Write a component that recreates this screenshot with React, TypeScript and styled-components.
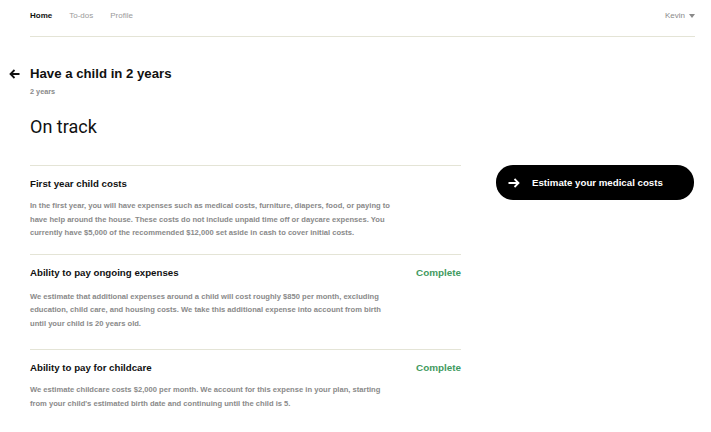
import styled, { createGlobalStyle } from "styled-components";

// Secções do plano
interface Goal {
  title: string;
  status?: string;
  loose?: boolean;
  text: string;
}

const goals: Goal[] = [
  {
    title: "First year child costs",
    text: "In the first year, you will have expenses such as medical costs, furniture, diapers, food, or paying to have help around the house. These costs do not include unpaid time off or daycare expenses. You currently have $5,000 of the recommended $12,000 set aside in cash to cover initial costs.",
  },
  {
    title: "Ability to pay ongoing expenses",
    status: "Complete",
    loose: true,
    text: "We estimate that additional expenses around a child will cost roughly $850 per month, excluding education, child care, and housing costs. We take this additional expense into account from birth until your child is 20 years old.",
  },
  {
    title: "Ability to pay for childcare",
    status: "Complete",
    text: "We estimate childcare costs $2,000 per month. We account for this expense in your plan, starting from your child's estimated birth date and continuing until the child is 5.",
  },
];

export default function App() {
  return (
    <>
      <GlobalStyle />
      <Page>
        <Nav>
          <NavLinks>
            <NavLink $active>Home</NavLink>
            <NavLink>To-dos</NavLink>
            <NavLink>Profile</NavLink>
          </NavLinks>
          <UserMenu>
            Kevin
            <svg width="6" height="4" viewBox="0 0 6 4">
              <path d="M0 0h6L3 4z" fill="#8a8a8a" />
            </svg>
          </UserMenu>
        </Nav>

        <TitleRow>
          <BackButton>
            <svg width="11" height="10" viewBox="0 0 11 10" fill="none">
              <path d="M10.5 5H1.5M5.5 1 1.5 5l4 4" stroke="#111" strokeWidth="1.8" />
            </svg>
          </BackButton>
          <Title>Have a child in 2 years</Title>
        </TitleRow>
        <Subtitle>2 years</Subtitle>
        <Status>On track</Status>

        <Main>
          <Goals>
            {goals.map((goal) => (
              <GoalSection key={goal.title} $loose={goal.loose}>
                <GoalHeader>
                  <GoalTitle>{goal.title}</GoalTitle>
                  {goal.status && <GoalStatus>{goal.status}</GoalStatus>}
                </GoalHeader>
                <GoalText $loose={goal.loose}>{goal.text}</GoalText>
              </GoalSection>
            ))}
          </Goals>
          <Side>
            <ActionButton>
              <svg width="12" height="10" viewBox="0 0 12 10" fill="none">
                <path d="M0.5 5H10.5M6.5 1l4 4-4 4" stroke="#fff" strokeWidth="1.8" />
              </svg>
              Estimate your medical costs
            </ActionButton>
          </Side>
        </Main>
      </Page>
    </>
  );
}

const GlobalStyle = createGlobalStyle`
  body {
    margin: 0;
    background: #fff;
    font-family: "Liberation Sans", Arial, sans-serif;
    color: #111;
  }
`;

const Page = styled.div`
  padding: 0 16px 0 30px;
`;

const Nav = styled.nav`
  display: flex;
  justify-content: space-between;
  align-items: flex-start;
  height: 37px;
  padding-top: 11px;
  box-sizing: border-box;
  border-bottom: 1px solid #e4e4d6;
`;

const NavLinks = styled.div`
  display: flex;
  gap: 17px;
`;

const NavLink = styled.a<{ $active?: boolean }>`
  font-size: 8px;
  line-height: 10px;
  font-weight: ${(p) => (p.$active ? 700 : 400)};
  color: ${(p) => (p.$active ? "#111" : "#9a9a9a")};
  cursor: pointer;
`;

const UserMenu = styled.div`
  display: flex;
  align-items: center;
  gap: 4px;
  font-size: 8px;
  line-height: 10px;
  color: #8a8a8a;
`;

const TitleRow = styled.div`
  display: flex;
  align-items: center;
  margin: 29px 0 0 -21px;
`;

const BackButton = styled.span`
  display: flex;
  width: 21px;
`;

const Title = styled.h1`
  margin: 0;
  font-size: 13.2px;
  line-height: 16px;
  font-weight: 700;
`;

const Subtitle = styled.div`
  margin-top: 5px;
  font-size: 7.3px;
  line-height: 10px;
  font-weight: 700;
  color: #8a8a8a;
`;

const Status = styled.h2`
  margin: 19px 0 0;
  font-family: Roboto, "Liberation Sans", sans-serif;
  font-size: 18px;
  line-height: 22px;
  font-weight: 400;
`;

const Main = styled.div`
  display: grid;
  grid-template-columns: 431px 1fr;
  gap: 35px;
  margin-top: 27px;
  align-items: start;
`;

const Goals = styled.div`
  display: flex;
  flex-direction: column;
`;

const GoalSection = styled.section<{ $loose?: boolean }>`
  border-top: 1px solid #e4e4d6;
  padding: 12px 0 ${(p) => (p.$loose ? "19px" : "14px")};
`;

const GoalHeader = styled.div`
  display: flex;
  justify-content: space-between;
  align-items: center;
  height: 12px;
`;

const GoalTitle = styled.h3`
  margin: 0;
  font-size: 9.7px;
  line-height: 12px;
  font-weight: 700;
`;

const GoalStatus = styled.span`
  font-size: 9.9px;
  line-height: 12px;
  font-weight: 700;
  color: #3f9a60;
`;

const GoalText = styled.p<{ $loose?: boolean }>`
  margin: ${(p) => (p.$loose ? "11px" : "9px")} 0 0;
  max-width: 366px;
  font-size: 7.6px;
  line-height: 13.5px;
  font-weight: 700;
  color: #8a8a8a;
`;

const Side = styled.aside`
  display: flex;
`;

const ActionButton = styled.button`
  display: flex;
  align-items: center;
  gap: 12px;
  width: 198px;
  height: 35px;
  padding: 0 0 0 12px;
  border: none;
  border-radius: 17px;
  background: #000;
  color: #fff;
  font-family: "Liberation Sans", Arial, sans-serif;
  font-size: 9.7px;
  font-weight: 700;
  cursor: pointer;
`;
